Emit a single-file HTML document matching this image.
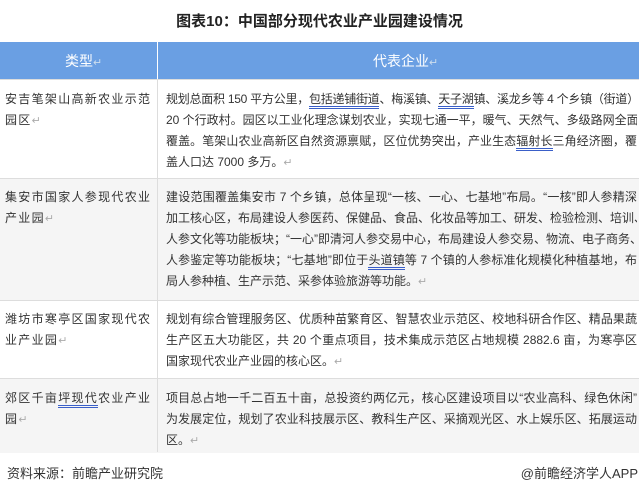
<!DOCTYPE html>
<html><head><meta charset="utf-8"><style>
body{margin:0;width:639px;height:492px;background:#fff;font-family:"Liberation Sans","Noto Sans CJK SC",sans-serif;color:#333;overflow:hidden;position:relative}
.t{position:absolute;top:10px;left:0;width:639px;text-align:center;font-size:15px;font-weight:bold;color:#222}
.hd{position:absolute;top:42px;left:0;width:639px;height:37px;background:#6a9fe3;color:#fff;font-size:14px}
.hd span{position:absolute;top:9px}
.vl{position:absolute;left:157px;width:1px;background:#ddd}
.row{position:absolute;left:0;width:639px;border-top:1px solid #ddd}
.c1{position:absolute;left:5px;width:150px;font-size:12px;line-height:21px;letter-spacing:1.3px}
.c2{position:absolute;left:166px;width:471px;font-size:12px;line-height:21px}
.c2 div{text-align:justify;text-align-last:justify;white-space:nowrap;overflow:hidden}
.c2 div.l{text-align-last:left}
.c1 div{white-space:nowrap}
u{text-decoration:none;border-bottom:3px double #3a5fc8}
.r{color:#aaa;font-size:11px}
.ft{position:absolute;top:463px;font-size:13px;color:#333}
</style></head><body>
<div class="t">图表10：中国部分现代农业产业园建设情况</div>
<div class="hd"><span style="left:65px">类型<span class="r" style="position:static;color:#cde">↵</span></span><span style="left:373px">代表企业<span class="r" style="position:static;color:#cde">↵</span></span><div style="position:absolute;left:157px;top:0;width:1px;height:37px;background:#fff"></div></div>
<div class="row" style="top:79px;height:99px;background:#fff">
<div class="c1" style="top:9px"><div>安吉笔架山高新农业示范</div><div>园区<span class="r">↵</span></div></div>
<div class="c2" style="top:9px"><div style="letter-spacing:-0.25px">规划总面积 150 平方公里，<u>包括递铺街道</u>、梅溪镇、<u>天子湖</u>镇、溪龙乡等 4 个乡镇（街道）</div><div>20 个行政村。园区以工业化理念谋划农业，实现七通一平，暖气、天然气、多级路网全面</div><div>覆盖。笔架山农业高新区自然资源禀赋，区位优势突出，产业生态<u>辐射长</u>三角经济圈，覆</div><div class="l">盖人口达 7000 多万。<span class="r">↵</span></div></div>
</div>
<div class="row" style="top:178px;height:121px;background:#f5f5f5">
<div class="c1" style="top:8px"><div>集安市国家人参现代农业</div><div>产业园<span class="r">↵</span></div></div>
<div class="c2" style="top:8px"><div>建设范围覆盖集安市 7 个乡镇，总体呈现“一核、一心、七基地”布局。“一核”即人参精深</div><div>加工核心区，布局建设人参医药、保健品、食品、化妆品等加工、研发、检验检测、培训、</div><div>人参文化等功能板块；“一心”即清河人参交易中心，布局建设人参交易、物流、电子商务、</div><div>人参鉴定等功能板块；“七基地”即位于<u>头道镇</u>等 7 个镇的人参标准化规模化种植基地，布</div><div class="l">局人参种植、生产示范、采参体验旅游等功能。<span class="r">↵</span></div></div>
</div>
<div class="row" style="top:300px;height:78px;background:#fff">
<div class="c1" style="top:8px"><div>潍坊市寒亭区国家现代农</div><div>业产业园<span class="r">↵</span></div></div>
<div class="c2" style="top:8px"><div>规划有综合管理服务区、优质种苗繁育区、智慧农业示范区、校地科研合作区、精品果蔬</div><div>生产区五大功能区，共 20 个重点项目，技术集成示范区占地规模 2882.6 亩，为寒亭区</div><div class="l">国家现代农业产业园的核心区。<span class="r">↵</span></div></div>
</div>
<div class="row" style="top:378px;height:74px;background:#f5f5f5">
<div class="c1" style="top:9px"><div>郊区千亩<u>坪现代</u>农业产业</div><div>园<span class="r">↵</span></div></div>
<div class="c2" style="top:9px"><div>项目总占地一千二百五十亩，总投资约两亿元，核心区建设项目以“农业高科、绿色休闲”</div><div>为发展定位，规划了农业科技展示区、教科生产区、采摘观光区、水上娱乐区、拓展运动</div><div class="l">区。<span class="r">↵</span></div></div>
</div>
<div class="vl" style="top:79px;height:373px"></div>
<div class="ft" style="left:7px">资料来源：前瞻产业研究院</div>
<div class="ft" style="right:1px">@前瞻经济学人APP</div>
</body></html>
